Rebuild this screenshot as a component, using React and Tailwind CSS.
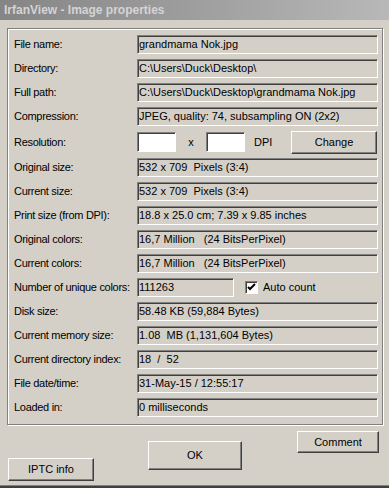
const sunken =
  "border border-t-[#808080] border-l-[#808080] border-b-white border-r-white shadow-[inset_1px_1px_0_#404040]";
const raised =
  "border border-t-white border-l-white border-b-[#404040] border-r-[#404040] shadow-[inset_-1px_-1px_0_#808080]";

function Row({ label, children, tall }) {
  return (
    <div className={`flex items-center ${tall ? "h-[22px]" : "h-[19px]"}`}>
      <div className="w-[123px] shrink-0 text-[11px] tracking-[-0.3px] text-black leading-none">{label}</div>
      {children}
    </div>
  );
}

function Field({ children, w = "w-[241px]" }) {
  return (
    <div className={`${w} h-[19px] ${sunken} flex items-center pl-[1px] text-[11px] text-black whitespace-pre overflow-hidden`}>
      {children}
    </div>
  );
}

function Button({ children, className }) {
  return (
    <button className={`${raised} bg-[#d4d0c8] flex items-center justify-center text-[11px] text-black ${className}`}>
      {children}
    </button>
  );
}

export default function App() {
  const rows = [
    ["File name:", "grandmama Nok.jpg"],
    ["Directory:", "C:\\Users\\Duck\\Desktop\\"],
    ["Full path:", "C:\\Users\\Duck\\Desktop\\grandmama Nok.jpg"],
    ["Compression:", "JPEG, quality: 74, subsampling ON (2x2)"],
  ];
  const rows2 = [
    ["Original size:", "532 x 709  Pixels (3:4)"],
    ["Current size:", "532 x 709  Pixels (3:4)"],
    ["Print size (from DPI):", "18.8 x 25.0 cm; 7.39 x 9.85 inches"],
    ["Original colors:", "16,7 Million   (24 BitsPerPixel)"],
    ["Current colors:", "16,7 Million   (24 BitsPerPixel)"],
  ];
  const rows3 = [
    ["Disk size:", "58.48 KB (59,884 Bytes)"],
    ["Current memory size:", "1.08  MB (1,131,604 Bytes)"],
    ["Current directory index:", "18  /  52"],
    ["File date/time:", "31-May-15 / 12:55:17"],
    ["Loaded in:", "0 milliseconds"],
  ];

  return (
    <div
      className="w-[389px] h-[488px] bg-[#d4d0c8] flex flex-col border-b-2 border-[#404040] shadow-[inset_0_-1px_0_#808080] whitespace-pre"
      style={{ fontFamily: '"Liberation Sans", Arial, sans-serif' }}
    >
      {/* title bar */}
      <div className="h-[20px] bg-gradient-to-r from-[#858585] to-[#b8b8b8] flex items-center pl-[4px]">
        <span className="text-[12px] font-bold text-[#d4d4d4]">IrfanView - Image properties</span>
      </div>

      {/* group frame */}
      <div className="ml-[7px] mt-[8px] w-[376px] border border-[#808080] shadow-[inset_1px_1px_0_#fff,1px_1px_0_#fff] pl-[6px] pt-[6px] pb-[7px] flex flex-col gap-[5px]">
        {rows.map(([l, v]) => (
          <Row key={l} label={l}>
            <Field>{v}</Field>
          </Row>
        ))}
        <Row label="Resolution:" tall>
          <div className={`w-[39px] h-[20px] bg-white ${sunken}`} />
          <span className="text-[11px] w-[30px] text-center">x</span>
          <div className={`w-[39px] h-[20px] bg-white ${sunken}`} />
          <span className="text-[11px] ml-[9px]">DPI</span>
          <Button className="ml-auto mr-[5px] w-[86px] h-[23px]">Change</Button>
        </Row>
        {rows2.map(([l, v]) => (
          <Row key={l} label={l}>
            <Field>{v}</Field>
          </Row>
        ))}
        <Row label="Number of unique colors:">
          <Field w="w-[97px]">111263</Field>
          <div className={`ml-[11px] w-[13px] h-[13px] bg-white ${sunken} flex items-center justify-center`}>
            <svg width="9" height="9" viewBox="0 0 9 9">
              <path d="M1 4 L3 6 L8 1" stroke="#000" strokeWidth="2" fill="none" />
            </svg>
          </div>
          <span className="ml-[5px] text-[11px]">Auto count</span>
        </Row>
        {rows3.map(([l, v]) => (
          <Row key={l} label={l}>
            <Field>{v}</Field>
          </Row>
        ))}
      </div>

      {/* bottom buttons */}
      <div className="flex items-start pl-[8px]">
        <Button className="mt-[33px] w-[86px] h-[23px]">IPTC info</Button>
        <Button className="mt-[16px] ml-[54px] w-[94px] h-[29px]">OK</Button>
        <Button className="mt-[6px] ml-[55px] w-[82px] h-[22px]">Comment</Button>
      </div>
    </div>
  );
}
